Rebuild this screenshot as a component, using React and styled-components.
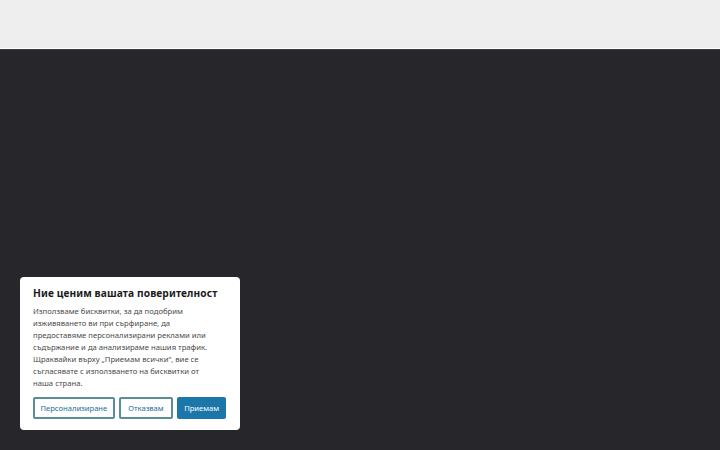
import React from "react";
import styled, { createGlobalStyle } from "styled-components";

const GlobalStyle = createGlobalStyle`
  html, body {
    margin: 0;
    padding: 0;
    height: 100%;
  }
  body {
    font-family: "Noto Sans", "Open Sans", sans-serif;
    background: #26262b;
  }
  #root {
    height: 100%;
  }
`;

const Page = styled.div`
  width: 720px;
  height: 450px;
  display: flex;
  flex-direction: column;
  overflow: hidden;
`;

const TopBar = styled.header`
  height: 48px;
  background: #eeeeee;
  border-bottom: 1px solid #ffffff;
  flex-shrink: 0;
`;

const Stage = styled.main`
  flex: 1;
  background: #26262b;
  border-top: 1px solid #3b3b40;
  display: flex;
  align-items: flex-end;
  padding: 0 0 20px 20px;
`;

const Banner = styled.section`
  width: 220px;
  box-sizing: border-box;
  background: #ffffff;
  border-radius: 4px;
  padding: 9px 13px 11px;
  display: flex;
  flex-direction: column;
`;

const Title = styled.h2`
  margin: 0 0 5px;
  font-size: 10.2px;
  line-height: 14px;
  font-weight: 700;
  color: #1b1b1b;
  letter-spacing: 0.1px;
  white-space: nowrap;
`;

const Body = styled.p`
  margin: 0 0 8px;
  font-size: 7.7px;
  line-height: 12px;
  color: #4a4a4a;
  white-space: nowrap;
`;

const Actions = styled.div`
  display: flex;
  gap: 4px;
`;

const Button = styled.button`
  height: 22px;
  padding: 0 ${(p) => p.$pad || 7}px;
  font-family: inherit;
  font-size: 7.6px;
  border-radius: 2px;
  cursor: pointer;
  border: 2px solid ${(p) => (p.$primary ? "#1b77aa" : "#5b8d99")};
  background: ${(p) => (p.$primary ? "#1b77aa" : "#ffffff")};
  color: ${(p) => (p.$primary ? "#ffffff" : "#1b6f99")};
`;

const lines = [
  "Използваме бисквитки, за да подобрим",
  "изживяването ви при сърфиране, да",
  "предоставяме персонализирани реклами или",
  "съдържание и да анализираме нашия трафик.",
  "Щраквайки върху „Приемам всички“, вие се",
  "съгласявате с използването на бисквитки от",
  "наша страна.",
];

export default function App() {
  return (
    <Page lang="bg">
      <GlobalStyle />
      <TopBar />
      <Stage>
        <Banner>
          <Title>Ние ценим вашата поверителност</Title>
          <Body>
            {lines.map((l, i) => (
              <React.Fragment key={i}>
                {l}
                {i < lines.length - 1 && <br />}
              </React.Fragment>
            ))}
          </Body>
          <Actions>
            <Button $pad={5.5}>Персонализиране</Button>
            <Button $pad={7.5}>Отказвам</Button>
            <Button $primary $pad={5}>Приемам</Button>
          </Actions>
        </Banner>
      </Stage>
    </Page>
  );
}
